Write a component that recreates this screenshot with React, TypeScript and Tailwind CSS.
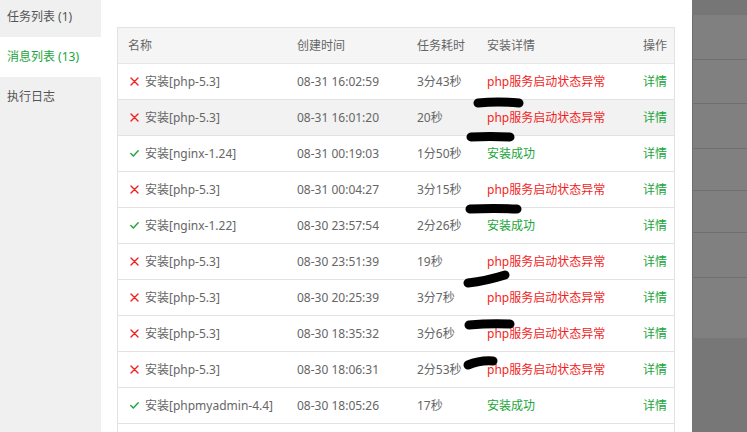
import React from "react";

type Row = { ok: boolean; name: string; time: string; dur: string; hover?: boolean };

const rows: Row[] = [
  { ok: false, name: "安装[php-5.3]", time: "08-31 16:02:59", dur: "3分43秒" },
  { ok: false, name: "安装[php-5.3]", time: "08-31 16:01:20", dur: "20秒", hover: true },
  { ok: true, name: "安装[nginx-1.24]", time: "08-31 00:19:03", dur: "1分50秒" },
  { ok: false, name: "安装[php-5.3]", time: "08-31 00:04:27", dur: "3分15秒" },
  { ok: true, name: "安装[nginx-1.22]", time: "08-30 23:57:54", dur: "2分26秒" },
  { ok: false, name: "安装[php-5.3]", time: "08-30 23:51:39", dur: "19秒" },
  { ok: false, name: "安装[php-5.3]", time: "08-30 20:25:39", dur: "3分7秒" },
  { ok: false, name: "安装[php-5.3]", time: "08-30 18:35:32", dur: "3分6秒" },
  { ok: false, name: "安装[php-5.3]", time: "08-30 18:06:31", dur: "2分53秒" },
  { ok: true, name: "安装[phpmyadmin-4.4]", time: "08-30 18:05:26", dur: "17秒" },
];

const Cross = () => (
  <span className="w-[10px] flex justify-center shrink-0">
    <svg width="9" height="9" viewBox="0 0 9 9">
      <path d="M1 1 L8 8 M8 1 L1 8" stroke="#f21e1e" strokeWidth="1.4" strokeLinecap="round" />
    </svg>
  </span>
);

const Check = () => (
  <span className="w-[10px] flex justify-center shrink-0">
    <svg width="9" height="7" viewBox="0 0 9 7">
      <path d="M0.8 3.6 L3.3 6 L8.2 0.8" stroke="#20a53a" strokeWidth="1.4" fill="none" strokeLinecap="round" strokeLinejoin="round" />
    </svg>
  </span>
);

const grid = "grid grid-cols-[169px_120px_70px_139px_60px] items-center h-[36px]";

export default function App() {
  return (
    <div
      className="relative flex w-[747px] h-[432px] overflow-hidden text-[12px] text-[#666]"
      style={{ fontFamily: '"Noto Sans", "Noto Sans CJK SC", sans-serif' }}
    >
      {/* sidebar */}
      <div className="w-[101px] shrink-0 bg-[#f0f0f0]">
        <div className="mt-[-3px] flex flex-col">
          <div className="h-[40px] flex items-center pl-[7px] text-[#555]">任务列表 (1)</div>
          <div className="h-[40px] flex items-center pl-[7px] bg-white text-[#20a53a]">消息列表 (13)</div>
          <div className="h-[40px] flex items-center pl-[7px] text-[#555]">执行日志</div>
        </div>
      </div>

      {/* main */}
      <div className="w-[591px] shrink-0 bg-white pl-[16px] pt-[27px]">
        <div className="w-[558px] border-l border-r border-t border-[#e2e2e2]">
          <div className={`${grid} bg-[#f5f5f5] border-b border-[#e6e6e6]`}>
            <div className="pl-[10px]">名称</div>
            <div className="pl-[10px]">创建时间</div>
            <div className="pl-[10px]">任务耗时</div>
            <div className="pl-[10px]">安装详情</div>
            <div className="pr-[9px] text-right">操作</div>
          </div>
          {rows.map((r, i) => (
            <div key={i} className={`${grid} border-b border-[#e2e2e2] ${r.hover ? "bg-[#f2f2f2]" : ""}`}>
              <div className="pl-[11px] flex items-center gap-[6px] whitespace-nowrap">
                {r.ok ? <Check /> : <Cross />}
                <span>{r.name}</span>
              </div>
              <div className="pl-[10px] whitespace-nowrap">{r.time}</div>
              <div className="pl-[10px] whitespace-nowrap">{r.dur}</div>
              <div className={`pl-[10px] whitespace-nowrap ${r.ok ? "text-[#20a53a]" : "text-[#f21e1e]"}`}>
                {r.ok ? "安装成功" : "php服务启动状态异常"}
              </div>
              <div className="pr-[9px] text-right text-[#20a53a]">详情</div>
            </div>
          ))}
          <div className="h-[36px]" />
        </div>
      </div>

      {/* overlay background */}
      <div className="flex-1 flex flex-col bg-[#808080] shadow-[inset_1px_0_0_#6e6e6e]">
        <div className="h-[15px] bg-[#767676]" />
        <div className="h-[44px]" />
        <div className="h-[1px] bg-[#6f6f6f]" />
        <div className="h-[43px]" />
        <div className="h-[1px] bg-[#6f6f6f]" />
        <div className="h-[44px]" />
        <div className="h-[1px] bg-[#6f6f6f]" />
        <div className="h-[41px]" />
        <div className="h-[1px] bg-[#6f6f6f]" />
        <div className="h-[41px]" />
        <div className="h-[1px] bg-[#6f6f6f]" />
        <div className="h-[44px]" />
        <div className="h-[1px] bg-[#6f6f6f]" />
        <div className="h-[60px]" />
        <div className="flex-1 bg-[#777777]" />
      </div>

      {/* marker scribbles */}
      <svg className="absolute inset-0 pointer-events-none" width="747" height="432" viewBox="0 0 747 432">
        <g stroke="#000" strokeWidth="9" strokeLinecap="round" fill="none">
          <path d="M478 103 Q 498 101 519 103" />
          <path d="M471 137 Q 490 136 510 137" />
          <path d="M470 209 Q 494 208 517 209" />
          <path d="M468 283 Q 486 281 505 275" />
          <path d="M469 325 Q 490 323 510 324" />
          <path d="M468 365 Q 480 360 493 361" />
        </g>
      </svg>
    </div>
  );
}
